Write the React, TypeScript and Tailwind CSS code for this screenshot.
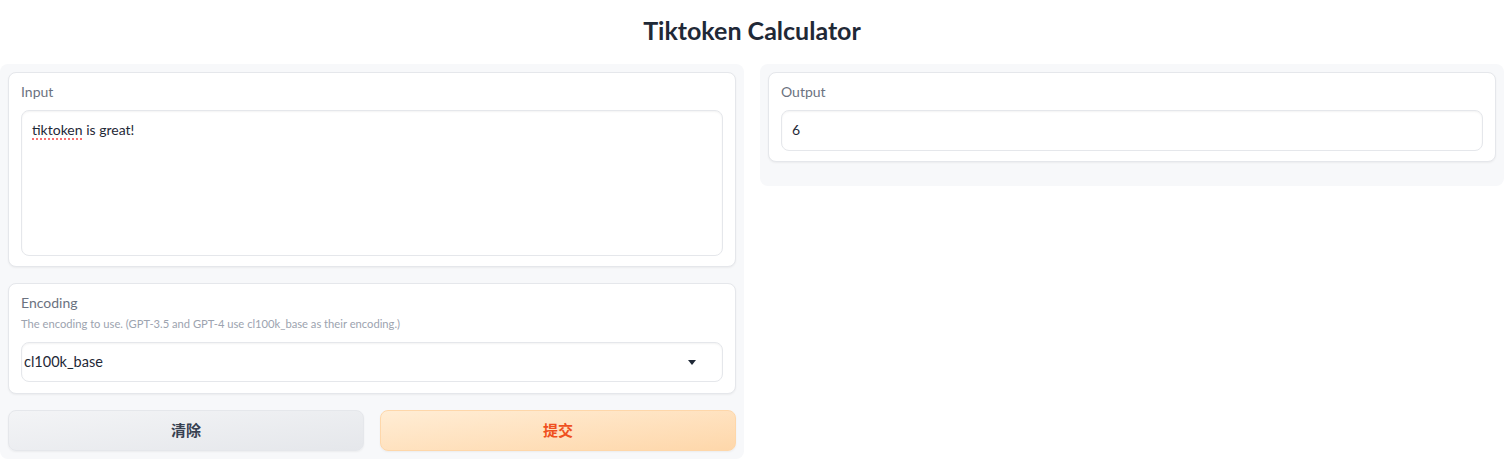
import React from 'react';

const font = { fontFamily: 'Lato, "Noto Sans CJK SC", sans-serif' };

// Gradio-style block wrapper
const Block: React.FC<{ children: React.ReactNode; className?: string }> = ({ children, className = 'pb-[10px]' }) => (
  <div className={`rounded-lg border border-[#e5e7eb] bg-white px-3 pt-[10px] shadow-[0_1px_2px_rgba(0,0,0,0.05)] ${className}`}>
    {children}
  </div>
);

const Label: React.FC<{ children: React.ReactNode; className?: string }> = ({ children, className = '' }) => (
  <div className={`text-[14px] leading-[17px] text-[#6b7280] ${className}`}>{children}</div>
);

export default function App() {
  return (
    <div className="min-h-screen w-[1504px] bg-white" style={font}>
      {/* Title */}
      <div className="flex h-16 items-center justify-center pb-[2px]">
        <h1 className="text-[25px] font-bold text-[#1f2937]">Tiktoken Calculator</h1>
      </div>

      <div className="grid grid-cols-2 items-start gap-4">
        {/* Left column */}
        <div className="flex flex-col gap-4 rounded-lg bg-[#f7f8fa] p-2">
          <Block>
            <Label className="mb-[10px]">Input</Label>
            <div className="h-[146px] rounded-lg border border-[#e5e7eb] bg-white px-[10px] py-[9px] text-[14px] leading-5 text-[#1f2937] shadow-[inset_0_1px_2px_rgba(0,0,0,0.05)]">
              <span className="underline decoration-[#f87171] decoration-dotted decoration-2 underline-offset-[3px]">tiktoken</span> is great!
            </div>
          </Block>

          <Block className="pb-[11px]">
            <Label className="mb-[5px]">Encoding</Label>
            <div className="mb-[10px] text-[11.2px] leading-4 text-[#9ca3af]">
              The encoding to use. (GPT-3.5 and GPT-4 use cl100k_base as their encoding.)
            </div>
            <div className="flex h-10 items-center justify-between rounded-lg border border-[#e5e7eb] bg-white pl-[2px] pr-[26px] text-[14.5px] text-[#1f2937] shadow-[inset_0_1px_2px_rgba(0,0,0,0.05)]">
              <span>cl100k_base</span>
              <svg width="8" height="5" viewBox="0 0 8 5" className="mt-[1px]">
                <path d="M0 0 H8 L4 5 Z" fill="#1f2937" />
              </svg>
            </div>
          </Block>

          <div className="grid grid-cols-2 gap-4">
            <button className="h-[41px] rounded-lg border border-[#e5e7eb] bg-gradient-to-br from-[#f3f4f6] to-[#e5e7eb] text-[15px] font-bold text-[#374151] shadow-[0_1px_2px_rgba(0,0,0,0.05)]">
              清除
            </button>
            <button className="h-[41px] rounded-lg border border-[#fed7aa] bg-gradient-to-br from-[#ffedd5] to-[#fed7aa] text-[15px] font-bold text-[#ef5020] shadow-[0_1px_2px_rgba(0,0,0,0.05)]">
              提交
            </button>
          </div>
        </div>

        {/* Right column */}
        <div className="rounded-lg bg-[#f7f8fa] p-2 pb-6">
          <Block>
            <Label className="mb-[10px]">Output</Label>
            <div className="flex h-[41px] items-center rounded-lg border border-[#e5e7eb] bg-white px-[10px] pb-[2px] text-[14px] text-[#1f2937] shadow-[inset_0_1px_2px_rgba(0,0,0,0.05)]">
              6
            </div>
          </Block>
        </div>
      </div>
    </div>
  );
}
